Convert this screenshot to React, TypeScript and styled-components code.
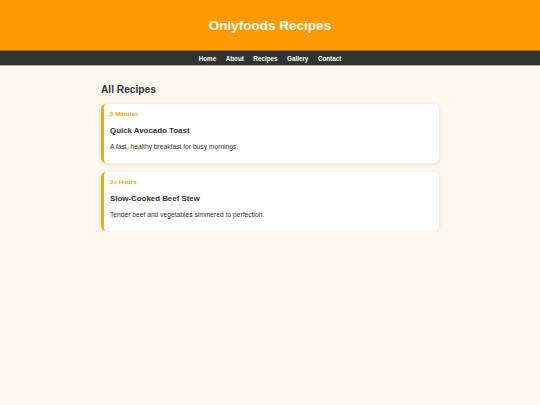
import React from "react";
import styled, { createGlobalStyle } from "styled-components";

const Global = createGlobalStyle`
  html, body { margin: 0; padding: 0; }
  body {
    background: #fdf8ee;
    font-family: "Liberation Sans", Arial, sans-serif;
    color: #333;
  }
`;

const Header = styled.header`
  background: #ff9900;
  height: 50px;
  display: flex;
  align-items: center;
  justify-content: center;
`;

const Title = styled.h1`
  margin: 0;
  color: #fff;
  font-size: 13.5px;
  font-weight: bold;
`;

const Nav = styled.nav`
  background: #333;
  height: 16px;
  border-top: 1px solid #a0662a;
  border-bottom: 1px solid #b8b0a8;
  box-sizing: border-box;
  display: flex;
  align-items: center;
  justify-content: center;
  gap: 9.5px;
`;

const NavLink = styled.a`
  color: #fff;
  font-size: 6.3px;
  font-weight: bold;
  text-decoration: none;
`;

const Main = styled.main`
  width: 338px;
  margin: 0 auto;
  padding-top: 17px;
`;

const Heading = styled.h2`
  margin: 0 0 8px 0;
  font-size: 10.2px;
  line-height: 13px;
  font-weight: bold;
  color: #333;
`;

const List = styled.div`
  display: flex;
  flex-direction: column;
  gap: 9px;
`;

const Card = styled.article`
  background: #fff;
  border-left: 3px solid #f5a623;
  border-radius: 5px;
  box-shadow: 0 1px 4px rgba(0, 0, 0, 0.1);
  padding: 6px 9px 9px 6px;
  height: 59px;
  box-sizing: border-box;
`;

const Tag = styled.div`
  color: #f39c12;
  font-size: 6.2px;
  font-weight: bold;
  line-height: 8px;
`;

const CardTitle = styled.h3`
  margin: 7.5px 0 0 0;
  font-size: 7.9px;
  font-weight: bold;
  color: #333;
  line-height: 10px;
`;

const Desc = styled.p`
  margin: 6px 0 0 0;
  font-size: 6.7px;
  color: #333;
  line-height: 9px;
`;

const recipes = [
  { tag: "5 Minutes", title: "Quick Avocado Toast", desc: "A fast, healthy breakfast for busy mornings." },
  { tag: "2+ Hours", title: "Slow-Cooked Beef Stew", desc: "Tender beef and vegetables simmered to perfection." },
];

export default function App() {
  return (
    <>
      <Global />
      <Header>
        <Title>Onlyfoods Recipes</Title>
      </Header>
      <Nav>
        {["Home", "About", "Recipes", "Gallery", "Contact"].map((n) => (
          <NavLink key={n} href="#">{n}</NavLink>
        ))}
      </Nav>
      <Main>
        <Heading>All Recipes</Heading>
        <List>
          {recipes.map((r) => (
            <Card key={r.title}>
              <Tag>{r.tag}</Tag>
              <CardTitle>{r.title}</CardTitle>
              <Desc>{r.desc}</Desc>
            </Card>
          ))}
        </List>
      </Main>
    </>
  );
}
